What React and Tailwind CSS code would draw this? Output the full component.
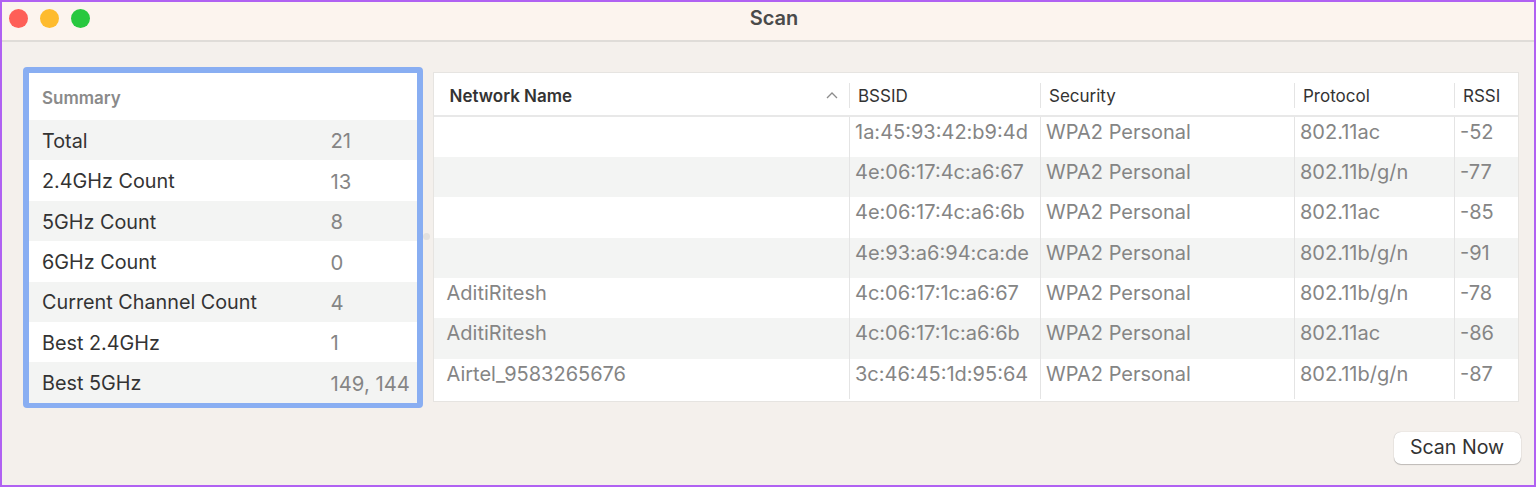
import React from "react";

const summary = [
  ["Total", "21"],
  ["2.4GHz Count", "13"],
  ["5GHz Count", "8"],
  ["6GHz Count", "0"],
  ["Current Channel Count", "4"],
  ["Best 2.4GHz", "1"],
  ["Best 5GHz", "149, 144"],
];

const networks = [
  ["", "1a:45:93:42:b9:4d", "WPA2 Personal", "802.11ac", "-52"],
  ["", "4e:06:17:4c:a6:67", "WPA2 Personal", "802.11b/g/n", "-77"],
  ["", "4e:06:17:4c:a6:6b", "WPA2 Personal", "802.11ac", "-85"],
  ["", "4e:93:a6:94:ca:de", "WPA2 Personal", "802.11b/g/n", "-91"],
  ["AditiRitesh", "4c:06:17:1c:a6:67", "WPA2 Personal", "802.11b/g/n", "-78"],
  ["AditiRitesh", "4c:06:17:1c:a6:6b", "WPA2 Personal", "802.11ac", "-86"],
  ["Airtel_9583265676", "3c:46:45:1d:95:64", "WPA2 Personal", "802.11b/g/n", "-87"],
];

const columns = "grid grid-cols-[415px_191px_254px_160px_1fr]";

const App = () => {
  return (
    <div className="h-[487px] w-[1536px] overflow-hidden border-[2.5px] border-[#b061f2] bg-[#f4f0ec] font-['Inter',sans-serif]">
      {/* Title bar */}
      <div className="relative flex h-[40px] items-center justify-center border-b-2 border-[#dfdcd8] bg-[#fcf4ee] pb-[7px] pl-[12px]">
        <div className="absolute left-[6.5px] top-[6.5px] flex gap-[12px]">
          <span className="h-[19px] w-[19px] rounded-full bg-[#fe5f57]" />
          <span className="h-[19px] w-[19px] rounded-full bg-[#febb2e]" />
          <span className="h-[19px] w-[19px] rounded-full bg-[#28c83f]" />
        </div>
        <span className="text-[20px] font-semibold text-[#4a4a4a]">Scan</span>
      </div>

      <div className="flex items-start pl-[20.5px] pt-[25px]">
        {/* Summary */}
        <div className="h-[341px] w-[400px] shrink-0 rounded-[4px] border-[6px] border-[#89aef2] bg-white">
          <div className="flex h-[47px] items-center pl-[13.5px] pt-[5px] text-[17px] font-semibold text-[#8a8a8a]">
            Summary
          </div>
          {summary.map(([label, value], i) => (
            <div
              key={label}
              className={`flex h-[40.4px] items-center pt-[3px] ${i % 2 === 0 ? "bg-[#f3f4f3]" : "bg-white"}`}
            >
              <span className="w-[302px] pl-[13.5px] text-[19.8px] text-[#333333]">{label}</span>
              <span className="text-[20.3px] text-[#858585]">{value}</span>
            </div>
          ))}
        </div>

        {/* Split view handle */}
        <div className="relative h-[341px] w-[10px] shrink-0">
          <span className="absolute left-[0px] top-[166px] h-[7px] w-[7px] rounded-full bg-[#e3e1de]" />
        </div>

        {/* Networks table */}
        <div className="mt-[5px] h-[330px] w-[1086px] border border-[#e6e4e1] bg-white">
          <div className={`${columns} h-[43.5px] items-center border-b-2 border-[#e8e8e8] pt-[3px] text-[17px] text-[#333333]`}>
            <div className="relative flex h-[25px] items-center pl-[16px] pt-[2px] font-semibold">
              Network Name
              <svg
                className="absolute right-[11px] top-[9px]"
                width="12"
                height="7"
                viewBox="0 0 12 7"
                fill="none"
                stroke="#8c8c8c"
                strokeWidth="1.3"
              >
                <path d="M1 6l5-5 5 5" />
              </svg>
            </div>
            {["BSSID", "Security", "Protocol", "RSSI"].map((name) => (
              <div key={name} className="flex h-[25px] items-center border-l border-[#e4e4e4] pl-[8.5px] pt-[2px]">
                {name}
              </div>
            ))}
          </div>
          {networks.map((row, i) => (
            <div
              key={i}
              className={`${columns} h-[40.4px] text-[20px] text-[#858585] ${i % 2 === 1 ? "bg-[#f3f4f3]" : "bg-white"}`}
            >
              {row.map((cell, j) => (
                <div
                  key={j}
                  className={`whitespace-nowrap ${j === 0 ? "pl-[13px]" : "border-l border-[#e4e4e4] pl-[5.5px]"}`}
                >
                  {cell}
                </div>
              ))}
            </div>
          ))}
        </div>
      </div>

      <div className="flex justify-end pr-[13.5px] pt-[24px]">
        <button className="h-[32px] w-[127px] rounded-[7px] bg-white text-[19.6px] text-[#333333] shadow-[0_0_1px_rgba(0,0,0,0.3),0_1px_1px_rgba(0,0,0,0.2)]">
          Scan Now
        </button>
      </div>
    </div>
  );
};

export default App;
